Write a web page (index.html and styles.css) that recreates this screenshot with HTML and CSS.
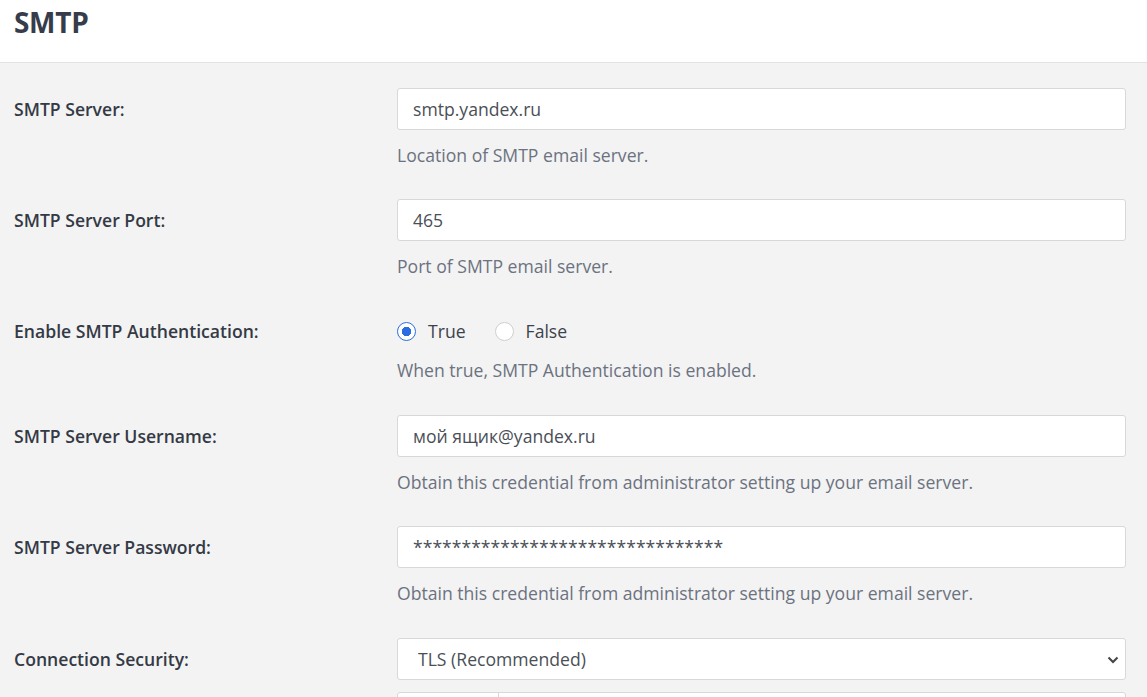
FILE: index.html
```html
<!DOCTYPE html>
<html lang="en">
<head>
    <meta charset="UTF-8">
    <title>SMTP</title>
    <link rel="stylesheet" href="styles.css">
</head>
<body>
    <header class="page-head">
        <h1>SMTP</h1>
    </header>
    <main class="settings">
        <div class="row">
            <label class="row-label" for="smtpServer">SMTP Server:</label>
            <div class="row-control">
                <input class="text-in" type="text" id="smtpServer" value="smtp.yandex.ru">
                <p class="help">Location of SMTP email server.</p>
            </div>
        </div>
        <div class="row">
            <label class="row-label" for="smtpPort">SMTP Server Port:</label>
            <div class="row-control">
                <input class="text-in" type="text" id="smtpPort" value="465">
                <p class="help">Port of SMTP email server.</p>
            </div>
        </div>
        <div class="row row-radio">
            <span class="row-label">Enable SMTP Authentication:</span>
            <div class="row-control">
                <div class="radios">
                    <label class="radio"><span class="dot checked"></span>True</label>
                    <label class="radio"><span class="dot"></span>False</label>
                </div>
                <p class="help help-tight">When true, SMTP Authentication is enabled.</p>
            </div>
        </div>
        <div class="row">
            <label class="row-label" for="smtpUser">SMTP Server Username:</label>
            <div class="row-control">
                <input class="text-in" type="text" id="smtpUser" value="мой ящик@yandex.ru">
                <p class="help">Obtain this credential from administrator setting up your email server.</p>
            </div>
        </div>
        <div class="row row-wide">
            <label class="row-label" for="smtpPass">SMTP Server Password:</label>
            <div class="row-control">
                <input class="text-in" type="text" id="smtpPass" value="********************************">
                <p class="help">Obtain this credential from administrator setting up your email server.</p>
            </div>
        </div>
        <div class="row">
            <label class="row-label" for="smtpSec">Connection Security:</label>
            <div class="row-control">
                <div class="select-wrap">
                    <select class="text-in select-in" id="smtpSec">
                        <option>TLS (Recommended)</option>
                        <option>STARTTLS</option>
                        <option>None</option>
                    </select>
                    <svg class="chev" width="12" height="8" viewBox="0 0 12 8"><path d="M1.5 1.5 L6 6 L10.5 1.5" fill="none" stroke="#444" stroke-width="2"/></svg>
                </div>
                <div class="group-in">
                    <span class="group-addon"></span>
                    <span class="group-field"></span>
                </div>
            </div>
        </div>
    </main>
</body>
</html>
```

FILE: styles.css
```css
body {
    margin: 0;
    background-color: #f3f3f3;
    color: #343a45;
    font-family: "Open Sans", "Liberation Sans", sans-serif;
    font-size: 17.6px;
}

.page-head {
    background-color: white;
    height: 62px;
    border-bottom: 1px solid #e2e2e2;
    padding: 0 14px;
}
.page-head h1 {
    margin: 0;
    padding-top: 2px;
    font-size: 28px;
    font-weight: 700;
    line-height: 40px;
    color: #363c4a;
    letter-spacing: -0.3px;
}

.settings {
    padding: 25px 21px 0 14px;
}

.row {
    display: flex;
    margin-bottom: 32px;
}
.row-radio {
    margin-bottom: 33px;
}
.row-wide {
    margin-bottom: 33px;
}
.row-label {
    width: 383px;
    flex-shrink: 0;
    height: 42px;
    line-height: 42px;
    font-weight: 600;
    color: #343a45;
}
.row-control {
    flex: 1;
}

.text-in {
    display: block;
    box-sizing: border-box;
    width: 100%;
    height: 42px;
    margin: 0;
    padding: 0 15px;
    border: 1px solid #d8d8d8;
    border-radius: 3px;
    background-color: white;
    font-family: inherit;
    font-size: 17.6px;
    color: #4a4f57;
    outline: none;
}

.help {
    margin: 13px 0 0;
    line-height: 24px;
    color: #6b7280;
}
.help-tight {
    margin-top: 6px;
}

.radios {
    display: flex;
    align-items: center;
    height: 42px;
}
.radio {
    display: flex;
    align-items: center;
    margin-right: 29px;
    color: #3c424d;
}
.dot {
    box-sizing: border-box;
    width: 19px;
    height: 19px;
    border-radius: 50%;
    border: 1px solid #cfcfcf;
    background-color: white;
    margin-right: 12px;
}
.dot.checked {
    border: 1.5px solid #2b6de0;
    background: radial-gradient(circle, #2b6de0 0 4.5px, white 5px);
}

.select-wrap {
    position: relative;
}
.select-in {
    appearance: none;
    -webkit-appearance: none;
    padding-left: 20px;
}
.chev {
    position: absolute;
    right: 7px;
    top: 18px;
}

.group-in {
    display: flex;
    margin-top: 12px;
    height: 42px;
    border: 1px solid #d8d8d8;
    border-radius: 3px;
    background-color: white;
}
.group-addon {
    width: 100px;
    border-right: 1px solid #d8d8d8;
}
.group-field {
    flex: 1;
}
```
